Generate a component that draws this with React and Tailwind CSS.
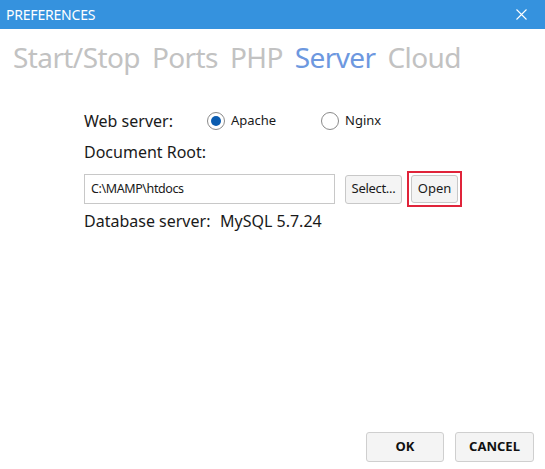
import React from 'react'

const font = { fontFamily: '"Noto Sans", "Open Sans", sans-serif' }

function Radio({ checked, label }) {
  return (
    <label className="flex items-center gap-[6px] text-[13px] text-[#1a1a1a]">
      <span className="w-[18px] h-[18px] rounded-full border border-[#8a8a8a] bg-white flex items-center justify-center">
        {checked && <span className="w-[10px] h-[10px] rounded-full bg-[#0b5cb0]" />}
      </span>
      {label}
    </label>
  )
}

export default function App() {
  const tabs = ['Start/Stop', 'Ports', 'PHP', 'Server', 'Cloud']
  return (
    <div className="w-[545px] h-[469px] bg-white flex flex-col overflow-hidden" style={font}>
      <div className="h-[29px] bg-[#3592de] flex items-center justify-between pl-[6px] pr-[18px] text-white">
        <span className="text-[14px] tracking-[-0.2px]">PREFERENCES</span>
        <svg width="11" height="11" viewBox="0 0 11 11" stroke="white" strokeWidth="1.1">
          <path d="M0.5 0.5L10.5 10.5M10.5 0.5L0.5 10.5" />
        </svg>
      </div>

      <div className="flex gap-[12px] pl-[13px] pt-[9px] text-[28px] leading-[38px] text-[#c2c2c2] tracking-[-0.6px]">
        {tabs.map((t) => (
          <span key={t} className={t === 'Server' ? 'text-[#6d98df]' : ''}>{t}</span>
        ))}
      </div>

      <div className="pl-[84px] pt-[33px] flex flex-col text-[16px] text-[#1a1a1a]">
        <div className="flex items-center h-[24px]">
          <span className="w-[123px]">Web server:</span>
          <div className="w-[114px]"><Radio checked label="Apache" /></div>
          <Radio label="Nginx" />
        </div>
        <div className="h-[24px] mt-[7px] flex items-center">Document Root:</div>
        <div className="flex items-center mt-[7px]">
          <div className="w-[251px] h-[30px] border border-[#c8c8c8] flex items-center px-[6px] text-[12.5px] tracking-[-0.4px]">
            C:\MAMP\htdocs
          </div>
          <button className="ml-[10px] w-[57px] h-[29px] rounded-[3px] border border-[#c8c8c8] bg-[#f4f4f4] text-[13px] tracking-[-0.3px] flex items-center justify-center">
            Select...
          </button>
          <div className="ml-[5px] p-[2px] border-2 border-[#e0243a]">
            <button className="w-[47px] h-[28px] rounded-[3px] border border-[#c8c8c8] bg-[#f4f4f4] text-[13px] flex items-center justify-center">
              Open
            </button>
          </div>
        </div>
        <div className="flex items-center h-[24px] mt-[2px]">
          <span className="w-[136px]">Database server:</span>
          <span>MySQL 5.7.24</span>
        </div>
      </div>

      <div className="mt-auto flex justify-end gap-[11px] pr-[11px] pb-[7px]">
        <button className="w-[78px] h-[30px] rounded-[3px] border border-[#cfcfcf] bg-[#f4f4f4] text-[13px] font-bold text-[#111]">OK</button>
        <button className="w-[79px] h-[30px] rounded-[3px] border border-[#cfcfcf] bg-[#f4f4f4] text-[13px] font-bold text-[#111]">CANCEL</button>
      </div>
    </div>
  )
}
